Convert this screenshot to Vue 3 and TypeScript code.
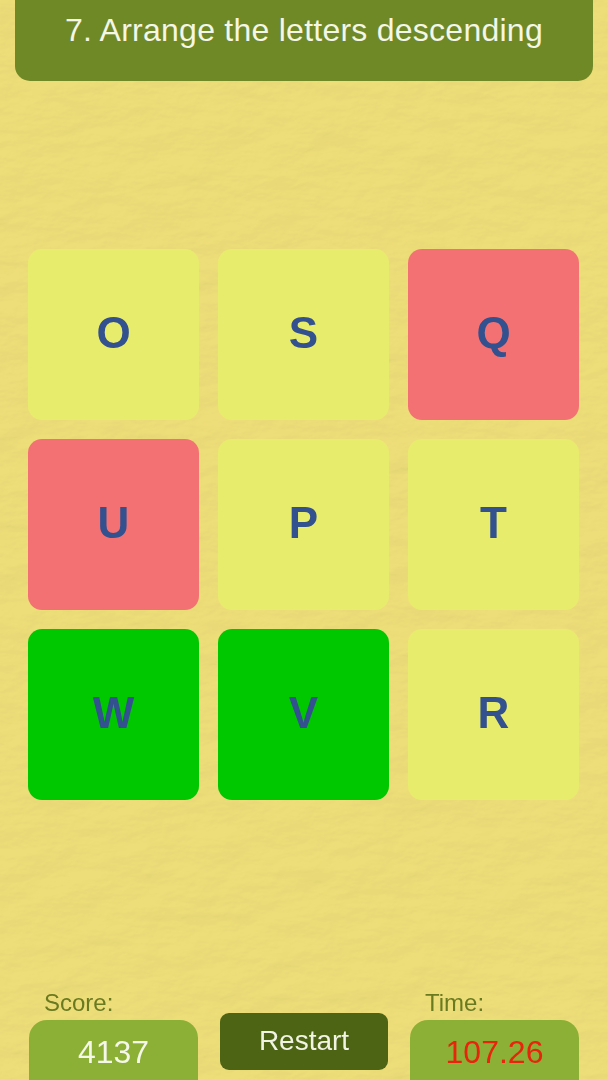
<script setup lang="ts">
interface Tile { letter: string; state: 'idle' | 'wrong' | 'right' }
const tiles: Tile[] = [
  { letter: 'O', state: 'idle' },
  { letter: 'S', state: 'idle' },
  { letter: 'Q', state: 'wrong' },
  { letter: 'U', state: 'wrong' },
  { letter: 'P', state: 'idle' },
  { letter: 'T', state: 'idle' },
  { letter: 'W', state: 'right' },
  { letter: 'V', state: 'right' },
  { letter: 'R', state: 'idle' },
]
</script>

<template>
  <div class="page">
    <svg class="paper" width="608" height="1080" aria-hidden="true">
      <filter id="paper-grain" x="0" y="0" width="100%" height="100%">
        <feTurbulence type="fractalNoise" baseFrequency="0.018 0.036" numOctaves="5" seed="11" result="n" />
        <feDiffuseLighting in="n" surfaceScale="3" diffuseConstant="1.05" lighting-color="#ffffff">
          <feDistantLight azimuth="235" elevation="62" />
        </feDiffuseLighting>
      </filter>
      <rect width="608" height="1080" filter="url(#paper-grain)" />
    </svg>

    <header class="title">7. Arrange the letters descending</header>

    <main class="grid">
      <div v-for="t in tiles" :key="t.letter" class="tile" :class="t.state">{{ t.letter }}</div>
    </main>

    <footer class="bottom">
      <div class="stat">
        <span class="label">Score:</span>
        <div class="box">4137</div>
      </div>
      <button class="restart" type="button">Restart</button>
      <div class="stat">
        <span class="label">Time:</span>
        <div class="box time">107.26</div>
      </div>
    </footer>
  </div>
</template>

<style>
html, body { margin: 0; padding: 0; }
</style>

<style scoped>
.page {
  position: relative;
  width: 608px;
  height: 1080px;
  overflow: hidden;
  background: #eede79;
  font-family: "Liberation Sans", Arial, sans-serif;
}
.paper {
  position: absolute;
  inset: 0;
  opacity: 0.24;
  mix-blend-mode: multiply;
}
.title {
  position: relative;
  box-sizing: border-box;
  width: 578px;
  height: 81px;
  margin-left: 15px;
  padding-top: 11px;
  background: #6f8926;
  border-radius: 0 0 15px 15px;
  color: #f4f6e6;
  font-size: 32px;
  letter-spacing: 0.25px;
  line-height: 38px;
  text-align: center;
}
.grid {
  position: relative;
  display: grid;
  grid-template-columns: repeat(3, 171px);
  grid-auto-rows: 171px;
  gap: 19px;
  margin: 168px 0 0 28px;
}
.tile {
  display: flex;
  align-items: center;
  justify-content: center;
  box-sizing: border-box;
  padding: 0 0 4px 0;
  border-radius: 14px;
  color: #33508f;
  font-size: 44px;
  font-weight: 700;
}
.idle { background: #e8ec6c; }
.wrong { background: #f47173; }
.right { background: #00c800; }
.bottom {
  position: relative;
  display: flex;
  align-items: flex-start;
  margin: 196px 0 0 29px;
}
.stat {
  display: flex;
  flex-direction: column;
  width: 169px;
}
.label {
  height: 33px;
  margin: -9px 0 0 15px;
  color: #6a7a20;
  font-size: 24px;
  line-height: 32px;
}
.box {
  height: 80px;
  padding-top: 13px;
  box-sizing: border-box;
  background: #8cb035;
  border-radius: 18px;
  color: #f5f7e8;
  font-size: 32px;
  line-height: 38px;
  text-align: center;
}
.box.time { color: #e8240c; }
.restart {
  box-sizing: border-box;
  width: 168px;
  height: 57px;
  margin: 17px 22px 0 22px;
  padding: 0 0 2px;
  border: 0;
  background: #4d6415;
  border-radius: 9px;
  color: #f1f4e2;
  font-family: inherit;
  font-size: 28px;
}
</style>
